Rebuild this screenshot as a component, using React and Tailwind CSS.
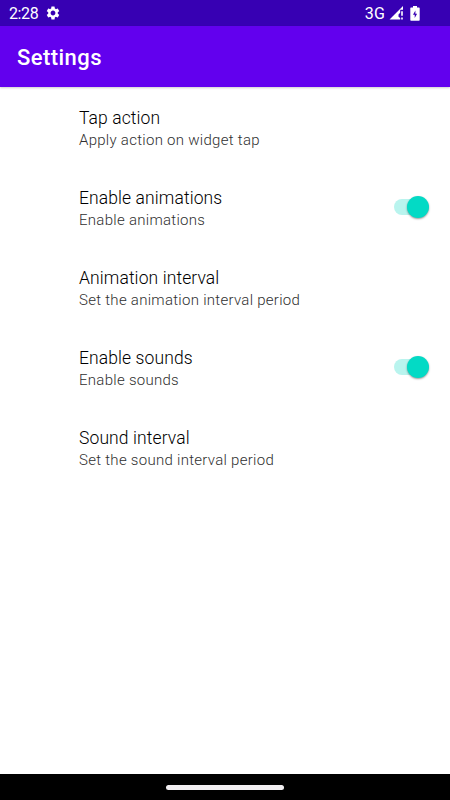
import React from 'react';
import { MdSettings } from 'react-icons/md';

const preferences = [
    { title: 'Tap action', summary: 'Apply action on widget tap' },
    { title: 'Enable animations', summary: 'Enable animations', toggle: true },
    { title: 'Animation interval', summary: 'Set the animation interval period' },
    { title: 'Enable sounds', summary: 'Enable sounds', toggle: true },
    { title: 'Sound interval', summary: 'Set the sound interval period' },
];

const StatusBar = () => {
    return (
        <div className="flex h-[26px] items-center justify-between bg-[#3700b3] pl-[9px] pr-[30px] text-white">
            <div className="flex items-center">
                <span className="pt-[2px] text-[16px] leading-[24px] tracking-[-0.4px]">2:28</span>
                <MdSettings className="ml-[7px] h-4 w-4" />
            </div>
            <div className="flex items-center">
                <span className="pt-px text-[16px] leading-[25px] tracking-[0.2px]">3G</span>
                {/* Signal */}
                <svg viewBox="0 0 14 14" fill="currentColor" className="ml-[4px] h-[14px] w-[14px]">
                    <path d="M0.5 13.5L14 0v3.8h-2.8v3L9.5 8.5v2.2l1.7 1.3v1.5z" />
                    <path d="M12.2 5.2h1.6v4.6h-1.6zM12.2 11.5h1.6V13.5h-1.6z" />
                </svg>
                {/* Battery */}
                <svg viewBox="0 0 10 15" fill="currentColor" className="ml-[7px] h-[15px] w-[10px]">
                    <path
                        fillRule="evenodd"
                        d="M3 0h4v1.5h1.7c.6 0 1 .4 1 1v11.2c0 .6-.4 1-1 1H1.3c-.6 0-1-.4-1-1V2.5c0-.6.4-1 1-1H3zM5.4 4.5L3 8.8h1.7v3.2L7.1 7.7H5.4z"
                    />
                </svg>
            </div>
        </div>
    );
};

const Toggle = () => {
    return (
        <div className="mb-[5px] flex h-[22px] w-[35px] items-center">
            <div className="flex h-4 w-[33px] items-center justify-end rounded-full bg-[#b9f4ee]">
                <div className="-mr-[2px] h-[22px] w-[22px] shrink-0 rounded-full bg-[#03dac5] shadow-[0_1px_2px_rgba(0,0,0,0.4)]" />
            </div>
        </div>
    );
};

const Preference = ({ item }) => {
    return (
        <div className="flex h-20 items-center justify-between pl-[79px] pr-[21px]">
            <div>
                <p className="text-[17.5px] font-light leading-[23px] tracking-[0.1px] text-black">{item.title}</p>
                <p className="pb-px text-[15px] font-light leading-[21px] tracking-[0.28px] text-[#303030]">{item.summary}</p>
            </div>
            {item.toggle && <Toggle />}
        </div>
    );
};

const App = () => {
    return (
        <div className="flex h-[800px] w-[450px] flex-col overflow-hidden bg-white font-['Roboto',sans-serif]">
            <StatusBar />

            <header className="z-10 flex h-[61px] items-center bg-[#6200ee] pl-[17px] pt-[3px] shadow-[0_1px_2px_rgba(0,0,0,0.2)]">
                <h1 className="text-[22px] font-medium leading-[30px] tracking-[0.45px] text-white">Settings</h1>
            </header>

            <main className="flex-1 pt-[2px]">
                {preferences.map((item) => (
                    <Preference key={item.title} item={item} />
                ))}
            </main>

            {/* Gesture bar */}
            <div className="flex h-[26px] items-center justify-center bg-black">
                <div className="h-[5px] w-[118px] rounded-full bg-[#f1eef1]" />
            </div>
        </div>
    );
};

export default App;
